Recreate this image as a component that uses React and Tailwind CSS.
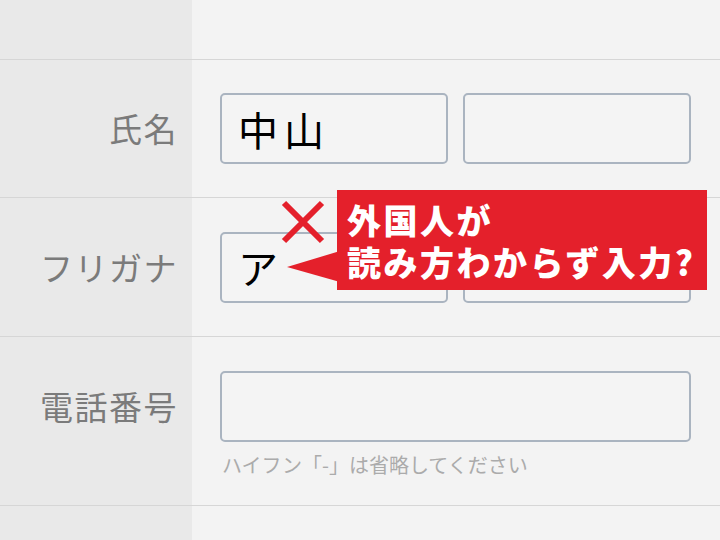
import React from 'react';

const Field = ({ children, className = '' }) => (
    <div className={`h-[71px] border-2 border-[#aab4c0] rounded-[5px] bg-[#f4f4f4] flex items-center pl-[16px] text-[40px] tracking-[6px] text-black leading-none ${className}`}>
        {children}
    </div>
);

const Label = ({ children }) => (
    <div className="text-right pr-[14px] text-[33px] tracking-[1.5px] text-[#7b7b7b] leading-none">{children}</div>
);

const App = () => {
    return (
        <div className="w-[720px] h-[540px] overflow-hidden bg-[#f3f3f3] font-['Noto_Sans_CJK_JP',sans-serif]">
            {/* previous row (cut off) */}
            <div className="grid grid-cols-[192px_1fr] h-[60px] border-b border-[#d6d6d6]">
                <div className="bg-[#e9e9e9]"></div>
                <div></div>
            </div>

            {/* 氏名 */}
            <div className="grid grid-cols-[192px_1fr] h-[138px] border-b border-[#d6d6d6]">
                <div className="bg-[#e9e9e9] flex items-center justify-end">
                    <Label>氏名</Label>
                </div>
                <div className="flex items-center gap-[15px] pl-[28px] pr-[29px]">
                    <Field className="flex-1">中山</Field>
                    <Field className="flex-1"></Field>
                </div>
            </div>

            {/* フリガナ */}
            <div className="grid grid-cols-[192px_1fr] h-[139px] border-b border-[#d6d6d6]">
                <div className="bg-[#e9e9e9] flex items-center justify-end">
                    <Label>フリガナ</Label>
                </div>
                <div className="relative flex items-center gap-[15px] pl-[28px] pr-[29px]">
                    <Field className="flex-1">ア</Field>
                    <Field className="flex-1"></Field>

                    {/* callout */}
                    <svg className="absolute left-[88px] top-[1px]" width="46" height="46" viewBox="0 0 46 46">
                        <path d="M4 4 L42 42 M42 4 L4 42" stroke="#e4202b" strokeWidth="6" fill="none" />
                    </svg>
                    <svg className="absolute left-[94px] top-[50px]" width="54" height="40" viewBox="0 0 54 40">
                        <polygon points="1,19 54,3 54,34" fill="#e4202b" />
                    </svg>
                    <div className="absolute left-[145px] top-[-8px] w-[370px] h-[100px] bg-[#e4202b] pl-[10px] pt-[9px] text-white font-black text-[34px] tracking-[2.5px] leading-[42px] whitespace-nowrap">
                        <div>外国人が</div>
                        <div>読み方わからず入力?</div>
                    </div>
                </div>
            </div>

            {/* 電話番号 */}
            <div className="grid grid-cols-[192px_1fr] h-[169px] border-b border-[#d6d6d6]">
                <div className="bg-[#e9e9e9] pt-[34px]">
                    <div className="h-[71px] flex items-center justify-end">
                        <Label>電話番号</Label>
                    </div>
                </div>
                <div className="pt-[34px] pl-[28px] pr-[29px]">
                    <Field></Field>
                    <p className="mt-[10px] text-[20px] leading-[26px] text-[#ababab] pl-[2px]">ハイフン「-」は省略してください</p>
                </div>
            </div>

            {/* next row (cut off) */}
            <div className="grid grid-cols-[192px_1fr] h-[40px]">
                <div className="bg-[#e9e9e9]"></div>
                <div></div>
            </div>
        </div>
    );
};

export default App;
